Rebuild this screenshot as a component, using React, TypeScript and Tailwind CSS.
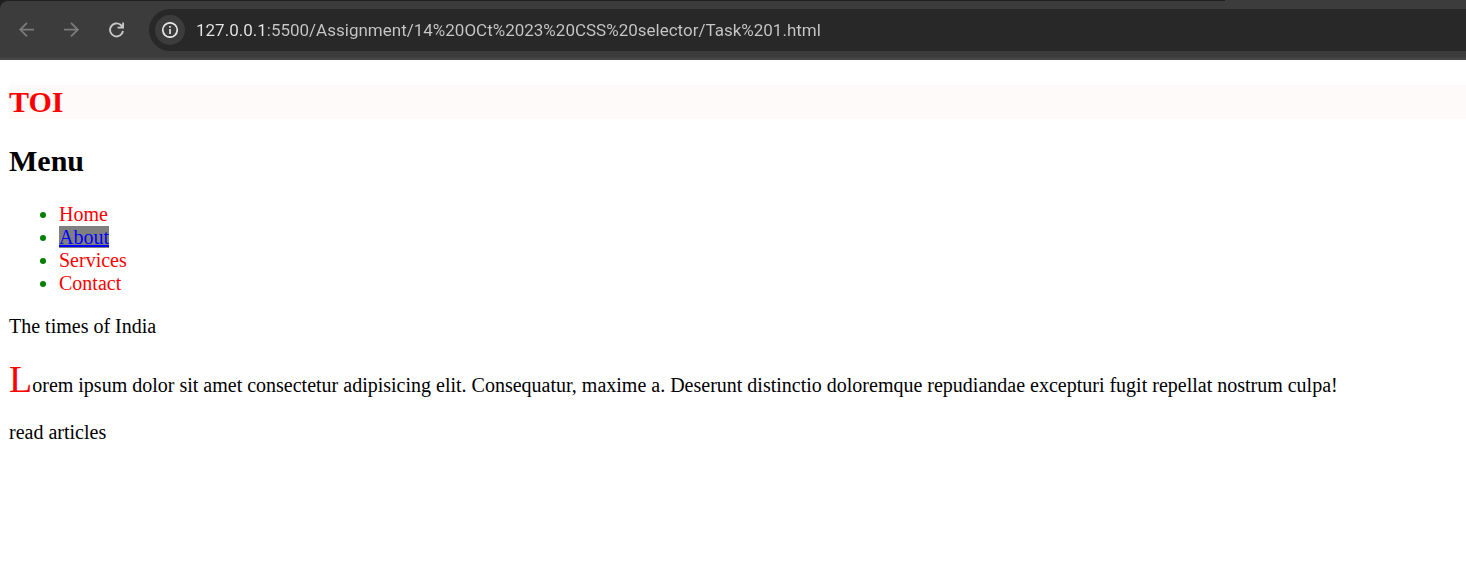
import React from "react";

const menu = ["Home", "About", "Services", "Contact"];
const navButton = "flex size-8 items-center justify-center";

function Toolbar() {
  return (
    <header className="relative h-[60px] overflow-hidden bg-[#1f1f1f]">
      <div className="absolute top-0 right-0 h-px w-[241px] bg-[#3c3c3c]" />
      <div className="mt-px flex h-[59px] items-start rounded-tl-lg border-b-2 border-[#474747] bg-[#3c3c3c] pt-2">
        <nav aria-label="History" className="mt-[5px] flex gap-[13px] pl-[10px] text-[#7a7a7a]">
          <button type="button" aria-label="Back" className={navButton}>
            <svg viewBox="0 0 16 16" className="size-4" fill="none" stroke="currentColor" strokeWidth="1.9">
              <path d="M16 7.6H2.6M9 .9 2.3 7.6 9 14.3" />
            </svg>
          </button>
          <button type="button" aria-label="Forward" className={navButton}>
            <svg viewBox="0 0 16 16" className="size-4" fill="none" stroke="currentColor" strokeWidth="1.9">
              <path d="M.9 7.6h14M8 .9l6.7 6.7L8 14.3" />
            </svg>
          </button>
          <button type="button" aria-label="Reload" className={navButton + " text-[#c7c7c7]"}>
            <svg viewBox="0 0 16 16" className="size-4" fill="none" stroke="currentColor" strokeWidth="1.9">
              <path d="M15 9A6.5 6.5 0 1 1 12.6 2.8L14.8 5" />
              <path d="M15.2.4v5.2H9.6" />
              <path d="M15.6 1.6v4.4h-4.4z" fill="currentColor" stroke="none" />
            </svg>
          </button>
        </nav>
        <div className="ml-[17px] flex h-[42px] flex-1 items-center rounded-l-full bg-[#282828] pl-[6px]">
          <button
            type="button"
            aria-label="View site information"
            className="flex size-[30px] shrink-0 items-center justify-center rounded-full bg-[#3c3c3c] text-[#e3e3e3]"
          >
            <svg viewBox="0 0 16 16" className="size-4" fill="none" stroke="currentColor" strokeWidth="1.7">
              <circle cx="8" cy="8" r="7.2" />
              <path d="M8 7v5M8 4v1.8" />
            </svg>
          </button>
          <input
            type="text"
            aria-label="Address"
            defaultValue="127.0.0.1:5500/Assignment/14%20OCt%2023%20CSS%20selector/Task%201.html"
            className="ml-[11px] min-w-0 flex-1 bg-[linear-gradient(to_right,#e8e8e8_70px,#c7c7c7_70px)] bg-clip-text font-[Roboto,sans-serif] text-[17px] leading-6 text-transparent caret-white outline-none"
          />
        </div>
      </div>
    </header>
  );
}

export default function App() {
  return (
    <div className="min-h-screen bg-white text-black">
      <Toolbar />
      <main className="pt-[25px] pl-[9px] font-['Liberation_Serif',serif] text-[20px] leading-[23px]">
        <h2 className="mb-[25px] bg-[#fffafa] text-[30px] leading-[34px] font-bold text-[#ff0000]">TOI</h2>
        <h2 className="mb-[25px] text-[30px] leading-[34px] font-bold">Menu</h2>
        <ul className="mb-5 list-disc pl-[50px] marker:text-[#008000]">
          {menu.map((item) => (
            <li key={item}>
              <a
                href={"#" + item.toLowerCase()}
                className={item === "About" ? "bg-[#808080] text-[#0000ff] underline" : "text-[#ff0000]"}
              >
                {item}
              </a>
            </li>
          ))}
        </ul>
        <p className="mb-5">The times of India</p>
        <p className="mb-5 first-letter:text-[38px] first-letter:leading-[43px] first-letter:text-[#ff0000]">
          Lorem ipsum dolor sit amet consectetur adipisicing elit. Consequatur, maxime a. Deserunt distinctio doloremque
          repudiandae excepturi fugit repellat nostrum culpa!
        </p>
        <p>read articles</p>
      </main>
    </div>
  );
}
